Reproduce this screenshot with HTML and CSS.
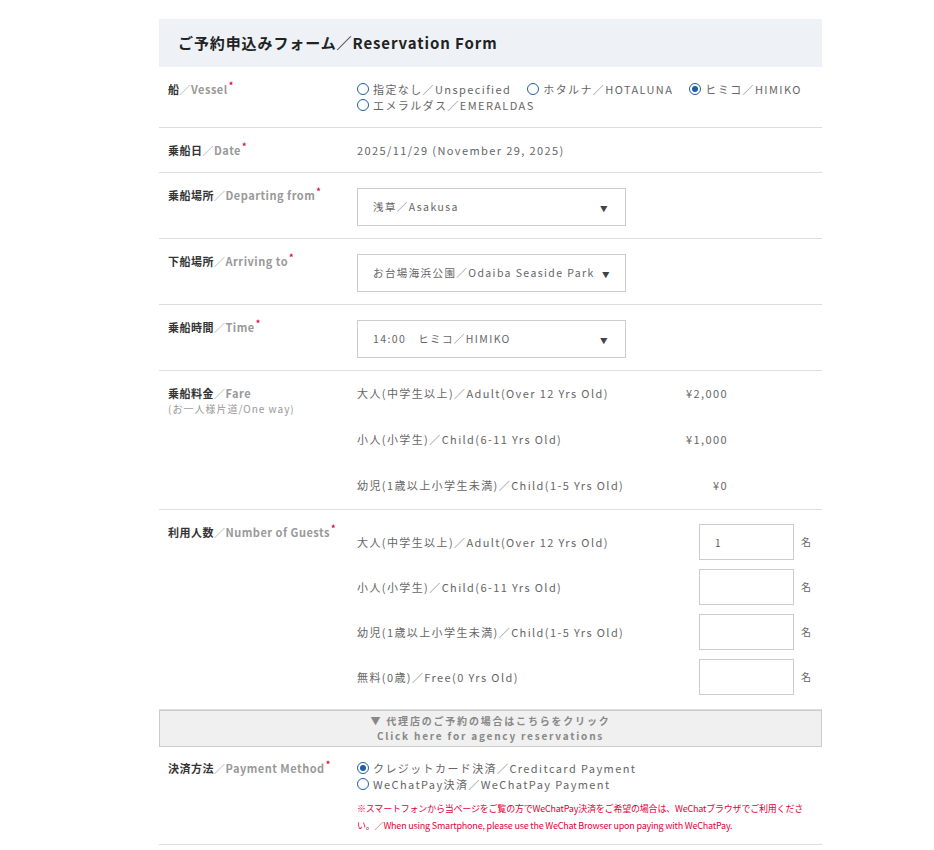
FILE: index.html
```html
<!DOCTYPE html>
<html lang="ja">
<head>
  <meta charset="UTF-8" />
  <title>ご予約申込みフォーム／Reservation Form</title>
  <meta name="viewport" content="width=device-width, initial-scale=1.0" />
  <link rel="stylesheet" href="styles.css">
</head>
<body>

<div class="form-wrap">
  <h1 class="form-title">ご予約申込みフォーム／Reservation Form</h1>

  <!-- 船 -->
  <div class="row">
    <div class="label">船<span class="en">／Vessel</span><span class="req">*</span></div>
    <div class="value radios wrap">
      <span class="radio"><span class="dot"></span>指定なし／Unspecified</span>
      <span class="radio"><span class="dot"></span>ホタルナ／HOTALUNA</span>
      <span class="radio checked"><span class="dot"></span>ヒミコ／HIMIKO</span>
      <span class="radio"><span class="dot"></span>エメラルダス／EMERALDAS</span>
    </div>
  </div>

  <!-- 日付 -->
  <div class="row">
    <div class="label">乗船日<span class="en">／Date</span><span class="req">*</span></div>
    <div class="value">2025/11/29 (November 29, 2025)</div>
  </div>

  <div class="row sel-row">
    <div class="label">乗船場所<span class="en">／Departing from</span><span class="req">*</span></div>
    <div class="value">
      <div class="select"><span>浅草／Asakusa</span></div>
    </div>
  </div>

  <div class="row sel-row">
    <div class="label">下船場所<span class="en">／Arriving to</span><span class="req">*</span></div>
    <div class="value">
      <div class="select tight"><span>お台場海浜公園／Odaiba Seaside Park</span></div>
    </div>
  </div>

  <div class="row sel-row">
    <div class="label">乗船時間<span class="en">／Time</span><span class="req">*</span></div>
    <div class="value">
      <div class="select"><span>14:00　ヒミコ／HIMIKO</span></div>
    </div>
  </div>

  <!-- 料金 -->
  <div class="row">
    <div class="label">乗船料金<span class="en">／Fare</span>
      <div class="sub">(お一人様片道/One way)</div>
    </div>
    <div class="value fares">
      <div class="fare"><span>大人(中学生以上)／Adult(Over 12 Yrs Old)</span><span class="price">¥2,000</span></div>
      <div class="fare"><span>小人(小学生)／Child(6-11 Yrs Old)</span><span class="price">¥1,000</span></div>
      <div class="fare"><span>幼児(1歳以上小学生未満)／Child(1-5 Yrs Old)</span><span class="price">¥0</span></div>
    </div>
  </div>

  <!-- 人数 -->
  <div class="row">
    <div class="label">利用人数<span class="en">／Number of Guests</span><span class="req">*</span></div>
    <div class="value guests">
      <div class="guest"><span class="name">大人(中学生以上)／Adult(Over 12 Yrs Old)</span><input class="num" type="text" value="1"><span class="unit">名</span></div>
      <div class="guest"><span class="name">小人(小学生)／Child(6-11 Yrs Old)</span><input class="num" type="text"><span class="unit">名</span></div>
      <div class="guest"><span class="name">幼児(1歳以上小学生未満)／Child(1-5 Yrs Old)</span><input class="num" type="text"><span class="unit">名</span></div>
      <div class="guest"><span class="name">無料(0歳)／Free(0 Yrs Old)</span><input class="num" type="text"><span class="unit">名</span></div>
    </div>
  </div>

  <div class="agency">
    <div>▼ 代理店のご予約の場合はこちらをクリック</div>
    <div>Click here for agency reservations</div>
  </div>

  <!-- 決済 -->
  <div class="row pay-row">
    <div class="label">決済方法<span class="en">／Payment Method</span><span class="req">*</span></div>
    <div class="value">
      <div class="radios">
        <span class="radio checked"><span class="dot"></span>クレジットカード決済／Creditcard Payment</span>
        <span class="radio"><span class="dot"></span>WeChatPay決済／WeChatPay Payment</span>
      </div>
      <p class="note">※スマートフォンから当ページをご覧の方でWeChatPay決済をご希望の場合は、WeChatブラウザでご利用ください。／When using Smartphone, please use the WeChat Browser upon paying with WeChatPay.</p>
    </div>
  </div>
</div>

</body>
</html>
```

FILE: styles.css
```css
/* base */
* {
  box-sizing: border-box;
  margin: 0;
  padding: 0;
}

body {
  font-family: 'Noto Sans CJK JP', 'Noto Sans', sans-serif;
  color: #666;
  background: #fff;
  font-size: 11px;
  letter-spacing: 1.4px;
}

.form-wrap {
  width: 663px;
  margin: 19px 0 0 159px;
}

.form-title {
  background: #eef2f7;
  color: #222;
  font-size: 15px;
  font-weight: bold;
  letter-spacing: 0.9px;
  line-height: 48px;
  height: 48px;
  padding-left: 19px;
}

.row {
  display: flex;
  padding: 14px 10px 14px 9px;
  border-bottom: 1px solid #ddd;
}

.sel-row {
  padding-top: 15px;
  padding-bottom: 12px;
}

.sel-row .label {
  margin-top: -1px;
}

.pay-row {
  padding-top: 13px;
  padding-bottom: 10px;
}

.label {
  width: 189px;
  flex-shrink: 0;
  color: #333;
  font-weight: bold;
  line-height: 16px;
  letter-spacing: 0.5px;
}

.label .en {
  color: #999;
}

.label .req {
  color: #e60033;
  font-size: 9px;
  vertical-align: top;
  position: relative;
  top: -3px;
  margin-left: 1px;
}

.label .sub {
  font-weight: normal;
  color: #999;
  font-size: 10px;
  letter-spacing: 1px;
}

.value {
  flex: 1;
  line-height: 16px;
}

/* radios */
.radios {
  display: flex;
  flex-direction: column;
}

.radios.wrap {
  flex-direction: row;
  flex-wrap: wrap;
  column-gap: 16px;
}

.radio {
  display: inline-flex;
  align-items: center;
}

.radio .dot {
  width: 12px;
  height: 12px;
  border: 1.5px solid #1c5ea8;
  border-radius: 50%;
  margin-right: 4px;
  display: inline-flex;
  align-items: center;
  justify-content: center;
}

.radio.checked .dot::after {
  content: "";
  width: 6px;
  height: 6px;
  border-radius: 50%;
  background: #1c5ea8;
}

/* select */
.select {
  width: 269px;
  height: 38px;
  border: 1px solid #ccc;
  display: flex;
  align-items: center;
  padding: 0 16px 0 15px;
  font-size: 10.5px;
}

.select.tight {
  padding-right: 14px;
}

.select span {
  flex: 1;
  white-space: nowrap;
  overflow: hidden;
}

.select::after {
  content: "▼";
  color: #444;
  font-size: 7.5px;
  margin-left: 2px;
  padding-top: 4px;
}

/* fares */
.fares {
  display: flex;
  flex-direction: column;
  gap: 30px;
  padding-bottom: 2px;
}

.fare {
  display: flex;
  width: 371px;
  justify-content: space-between;
}

/* guests */
.guests {
  display: flex;
  flex-direction: column;
  gap: 9px;
}

.guest {
  display: flex;
  align-items: center;
}

.guest .name {
  flex: 1;
}

.num {
  width: 95px;
  height: 36px;
  border: 1px solid #ccc;
  font-family: inherit;
  font-size: 10px;
  color: #555;
  padding-left: 15px;
  outline: none;
}

.unit {
  margin-left: 7px;
  font-size: 10px;
  width: 11px;
}

/* agency toggle */
.agency {
  background: #f0f0f0;
  border: 1px solid #ccc;
  color: #888;
  font-weight: bold;
  text-align: center;
  font-size: 10px;
  letter-spacing: 1.8px;
  line-height: 15px;
  padding: 2px 0 3px;
}

.note {
  color: #e4003a;
  font-size: 9px;
  letter-spacing: -0.2px;
  line-height: 17px;
  margin-top: 8px;
}
```
